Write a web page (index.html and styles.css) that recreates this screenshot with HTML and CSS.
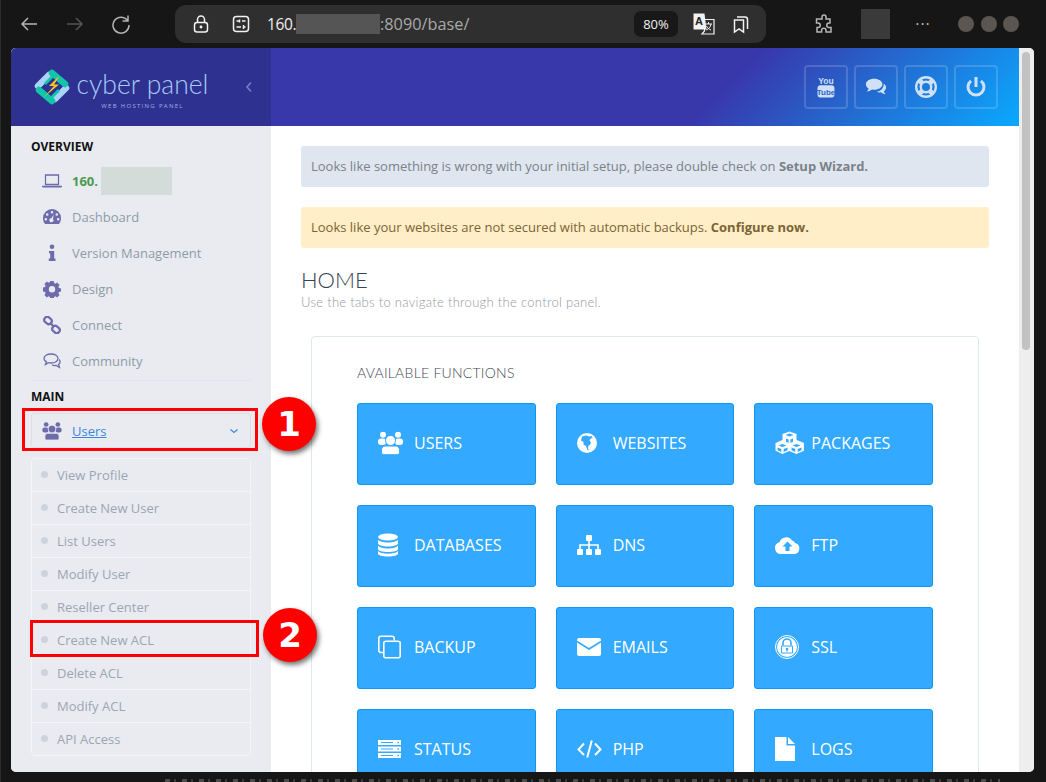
FILE: index.html
```
<!DOCTYPE html>
<html lang="en">
<head>
<meta charset="utf-8">
<title>CyberPanel</title>
<link rel="stylesheet" href="styles.css">
</head>
<body>
<header class="browser-bar">
  <div class="nav-buttons">
    <svg class="tb-icon" viewBox="0 0 20 20"><path d="M18 10H3M9 4l-6 6 6 6"/></svg>
    <svg class="tb-icon dim" viewBox="0 0 20 20"><path d="M2 10h15M11 4l6 6-6 6"/></svg>
    <svg class="tb-icon" viewBox="0 0 20 20"><path d="M16.500 6.500A8 8 0 1 0 18 11M17 1.500v5.500h-5.500"/></svg>
  </div>
  <div class="address">
    <svg class="tb-icon white lock" viewBox="0 0 20 20"><rect x="3.500" y="8.500" width="13" height="9.500" rx="2.500"/><path d="M6.500 8.500V5.500a3.500 3.500 0 0 1 7 0v3"/><circle cx="10" cy="13" r=".7"/></svg>
    <svg class="tb-icon white site" viewBox="0 0 20 20"><rect x="2.500" y="2.500" width="15" height="15" rx="3"/><path d="M5.500 7h3M11 7h3.500M8.500 5.500v3M5.500 13h4.500M13 13h1.500M12.500 11v4"/></svg>
    <span class="url"><span class="url-host">160.</span><span class="url-mask"></span><span>:8090/base/</span></span>
    <span class="zoom-pill">80%</span>
    <svg class="tb-icon translate" viewBox="0 0 22 22">
      <path class="tr-back" d="M11 6.500h10v14.500H9l2.500-3z"/>
      <path class="tr-han" d="M12 11h7M15.500 9v2M18 11c-.5 3-2 5-5 6M13.500 13c.8 1.800 2.500 3.200 4.500 4"/>
      <path class="tr-front" d="M.5 .5h11l2 16H.5z"/>
      <text class="tr-a" x="6" y="12" text-anchor="middle">A</text>
    </svg>
    <svg class="tb-icon white saved" viewBox="0 0 20 20"><path d="M3.500 6h9v12l-4.500-3-4.500 3z"/><path d="M6 3h8a2.500 2.500 0 0 1 2.500 2.500V15"/></svg>
  </div>
  <svg class="tb-icon puzzle" viewBox="0 0 20 20"><path d="M8 3a2 2 0 0 1 4 0v2h4v4h-1a2.200 2.200 0 0 0 0 4.500h2V18h-5v-1.500a2.200 2.200 0 0 0-4.400 0V18H3v-4.500h1a2.200 2.200 0 0 0 0-4.500H2.500V5H8z"/></svg>
  <span class="profile-mask"></span>
  <span class="more">···</span>
  <div class="window-dots"><i></i><i></i><i></i></div>
</header>

<div class="window">
  <div class="page">
    <aside class="sidebar">
      <div class="brand">
        <svg class="brand-mark" viewBox="0 0 36 36">
          <g stroke-width="6.500" fill="none" stroke-linecap="round">
            <path stroke="#a7d4f7" d="M4 17L15 6"/>
            <path stroke="#a7d4f7" d="M32 19L21 30"/>
            <path stroke="#12c4a8" d="M18 4L31 15"/>
            <path stroke="#12c4a8" d="M5 21L18 32"/>
          </g>
          <path fill="#2f3191" d="M18 8l10 10-10 10L8 18z"/>
          <path fill="#12c4a8" d="M18 6l2 2-8 8-2-2zM18 30l-2-2 8-8 2 2z"/>
          <path fill="#ffc61a" d="M24 8l-9 9h5L10 28l15-12.500h-5l5-7.500z"/>
        </svg>
        <div class="brand-text">
          <span class="brand-name">cyber panel</span>
          <span class="brand-sub">WEB HOSTING PANEL</span>
        </div>
        <svg class="collapse" viewBox="0 0 8 12"><path d="M6 1.500L2 6l4 4.500"/></svg>
      </div>
      <nav class="side-nav">
        <h4 class="nav-title">OVERVIEW</h4>
        <a class="nav-item host">
          <svg class="nav-icon" viewBox="0 0 20 14"><path fill="none" stroke="currentColor" stroke-width="1.300" d="M3.500 1h13v9.500h-13z"/><path d="M0 11.800h20v.7l-1 1H1l-1-1z"/></svg>
          <span class="host-ip">160.</span><span class="host-mask"></span>
        </a>
        <a class="nav-item">
          <svg class="nav-icon" viewBox="0 0 18 18"><path fill-rule="evenodd" d="M9 1a9 9 0 0 1 9 9c0 2.500-.7 4.500-2 6H2C.7 14.500 0 12.500 0 10a9 9 0 0 1 9-9zM9 3a1.300 1.300 0 1 0 0 2.600A1.300 1.300 0 0 0 9 3zM4.200 5.200a1.300 1.300 0 1 0 0 2.600 1.300 1.300 0 0 0 0-2.600zM13.800 5.200a1.300 1.300 0 1 0 0 2.600 1.300 1.300 0 0 0 0-2.600zM2.800 10a1.300 1.300 0 1 0 0 2.600 1.300 1.300 0 0 0 0-2.600zM15.200 10a1.300 1.300 0 1 0 0 2.600 1.300 1.300 0 0 0 0-2.600zM10.800 6.500L8.300 10.200a2 2 0 1 0 1.600.7z"/></svg>
          <span>Dashboard</span>
        </a>
        <a class="nav-item">
          <svg class="nav-icon" viewBox="0 0 18 18"><circle cx="9" cy="2.800" r="2.300"/><path d="M6 7h5.200v7.500h1.300V17H5.800v-2.500h1.400V9.300H6z"/></svg>
          <span>Version Management</span>
        </a>
        <a class="nav-item">
          <svg class="nav-icon" viewBox="0 0 18 18"><path fill-rule="evenodd" d="M7.300 1h3.400l.4 2.100 1.300.6 1.800-1.200 2.400 2.400-1.200 1.800.6 1.300 2 .4v3.200l-2 .4-.6 1.300 1.200 1.800-2.400 2.400-1.800-1.200-1.300.6-.4 2.100H7.300l-.4-2.100-1.300-.6-1.800 1.200-2.400-2.400 1.200-1.800-.6-1.300-2-.4V7.400l2-.4.6-1.300-1.200-1.800 2.400-2.400 1.800 1.200 1.300-.6zM9 6a3.200 3.200 0 1 0 0 6.400A3.200 3.200 0 0 0 9 6z"/></svg>
          <span>Design</span>
        </a>
        <a class="nav-item">
          <svg class="nav-icon" viewBox="0 0 18 18"><g fill="none" stroke="currentColor" stroke-width="2.200"><rect x="1" y="1.500" width="8" height="6" rx="3" transform="rotate(40 5 4.500)"/><rect x="9" y="10.500" width="8" height="6" rx="3" transform="rotate(40 13 13.500)"/><path d="M7 6.500l4 4.500"/></g></svg>
          <span>Connect</span>
        </a>
        <a class="nav-item">
          <svg class="nav-icon" viewBox="0 0 18 18"><g fill="none" stroke="currentColor" stroke-width="1.300"><path d="M8 2c4 0 7 2 7 4.500S12 11 8 11c-1 0-2 0-2.500-.3L2.500 12.500l1-2.700C1.800 9 1 7.800 1 6.500 1 4 4 2 8 2z"/><path d="M16 7.500c1 .8 1.300 2 1 3-.3 1-1 1.500-1.500 2l1 2.800-3.500-1.800c-1.500.3-3 0-4-.7"/></g></svg>
          <span>Community</span>
        </a>
        <hr class="nav-rule">
        <h4 class="nav-title main-title">MAIN</h4>
        <a class="nav-open">
          <svg class="nav-icon" viewBox="0 0 25 23"><use href="#ic-users"/></svg>
          <span class="open-label">Users</span>
          <svg class="open-caret" viewBox="0 0 10 6"><path d="M1.500 1.500L5 4.500l3.500-3"/></svg>
        </a>
        <ul class="sub-list">
          <li>View Profile</li>
          <li>Create New User</li>
          <li>List Users</li>
          <li>Modify User</li>
          <li>Reseller Center</li>
          <li>Create New ACL</li>
          <li>Delete ACL</li>
          <li>Modify ACL</li>
          <li>API Access</li>
        </ul>
      </nav>
    </aside>

    <div class="content">
      <div class="topbar">
        <a class="top-btn">
          <svg viewBox="0 0 22 26">
            <text class="yt-you" x="11" y="9.500" text-anchor="middle">You</text>
            <rect x="1" y="11" width="20" height="14.500" rx="3.500"/>
            <text class="yt-tube" x="11" y="22.500" text-anchor="middle">Tube</text>
          </svg>
        </a>
        <a class="top-btn">
          <svg viewBox="0 0 24 20"><path d="M10 1c5 0 9 2.600 9 6s-4 6-9 6c-.8 0-1.600 0-2.300-.2C6 14.200 4 14.800 2 15c1-1 1.700-2 2-3.300C2 10.600 1 9 1 7c0-3.400 4-6 9-6z"/><path d="M20.500 6.500c1.700 1 2.500 2.500 2.500 4 0 1.600-.9 3-2.400 4 .2 1.200.8 2.300 1.900 3.500-2-.3-3.800-1-5.300-2.200-1.600.2-3.200 0-4.500-.6 4-.300 7.800-3.500 7.800-8.700z"/></svg>
        </a>
        <a class="top-btn">
          <svg class="lifering" viewBox="0 0 22 22"><circle cx="11" cy="11" r="9.800"/><circle cx="11" cy="11" r="5.200"/><path class="wedge" d="M4 4l3.800 3.800M18 4l-3.800 3.800M4 18l3.800-3.800M18 18l-3.800-3.800"/></svg>
        </a>
        <a class="top-btn">
          <svg class="power" viewBox="0 0 20 22"><path d="M10 1v10"/><path d="M5 4.800a8 8 0 1 0 10 0"/></svg>
        </a>
      </div>

      <main class="main">
        <p class="alert alert-info">Looks like something is wrong with your initial setup, please double check on <b>Setup Wizard.</b></p>
        <p class="alert alert-warn">Looks like your websites are not secured with automatic backups. <b>Configure now.</b></p>
        <h1 class="page-title">HOME</h1>
        <p class="page-sub">Use the tabs to navigate through the control panel.</p>
        <section class="panel">
          <h2 class="panel-title">AVAILABLE FUNCTIONS</h2>
          <div class="tiles">
            <a class="tile"><svg class="tile-icon w25" viewBox="0 0 25 23"><use href="#ic-users"/></svg><span>USERS</span></a>
            <a class="tile"><svg class="tile-icon w20" viewBox="0 0 20 20"><circle cx="10" cy="10" r="10"/><path class="cut" d="M5 3.500l4-1 3 1 2.500-.5 1 2-2 .5-1 2 1.500 2-1 2.500-1.500.5-.5 3 1 1.500-1.500 0-1.500-4-2.500-1.500 0-2.500-2.500-1.500z"/></svg><span>WEBSITES</span></a>
            <a class="tile"><svg class="tile-icon w29" viewBox="0 0 29 23"><path d="M14.500 0l7 2.600v6l6.500 2.400.9.500v7.700l-7.500 3.300-7-2.900-7 2.900L.5 19.200v-7.700l7-2.900V2.600z"/><path class="cut" d="M14.500 2l4 1.500-4 1.500-4-1.500zM11 7l2.600 1v3.500L11 10.300zM18 7v3.300l-2.600 1.200V8zM7.500 12.500l4 1.500-4 1.500-4-1.500zM2.500 16l3.800 1.400v3L2.500 18.700zM12.500 16v2.700l-3.800 1.700v-3zM21.500 12.500l4 1.500-4 1.500-4-1.500zM16.500 16l3.800 1.400v3l-3.800-1.700zM26.500 16v2.700l-3.800 1.700v-3z"/></svg><span>PACKAGES</span></a>
            <a class="tile"><svg class="tile-icon w20" viewBox="0 0 20 23"><ellipse cx="10" cy="3.500" rx="10" ry="3.500"/><path d="M0 6c1 2 5.500 3 10 3s9-1 10-3v3.800c0 2-4.500 3.200-10 3.200S0 11.800 0 9.800zM0 12c1 2 5.500 3 10 3s9-1 10-3v3.500c0 2-4.500 3-10 3s-10-1-10-3zM0 17.600c1.500 1.800 5.500 2.600 10 2.600s8.500-.8 10-2.600v2.400c0 1.800-4.500 3-10 3s-10-1.200-10-3z"/></svg><span>DATABASES</span></a>
            <a class="tile"><svg class="tile-icon w24" viewBox="0 0 24 20"><rect x="9" y="0" width="6" height="6" rx="1"/><rect x="0" y="14" width="6" height="6" rx="1"/><rect x="9" y="14" width="6" height="6" rx="1"/><rect x="18" y="14" width="6" height="6" rx="1"/><path d="M11.200 6h1.600v3.200H21.800V14h-1.600v-3.200h-7.400V14h-1.600v-3.200H3.800V14H2.200V9.200h9z"/></svg><span>DNS</span></a>
            <a class="tile"><svg class="tile-icon w25" viewBox="0 0 25 18"><path d="M6 18a6 6 0 0 1-1.500-11.800A7 7 0 0 1 17 4.500a3.500 3.500 0 0 1 3 2.500 5.600 5.600 0 0 1-.5 11z"/><path class="cut" d="M12.500 5.500L7.500 10.500h3v4.500h4v-4.500h3z"/></svg><span>FTP</span></a>
            <a class="tile"><svg class="tile-icon w23 outline" viewBox="0 0 23 23"><path d="M5 17H3a2.200 2.200 0 0 1-2.200-2.200V3A2.200 2.200 0 0 1 3 .8h11A2.200 2.200 0 0 1 16.200 3v2"/><rect x="5.800" y="5.800" width="16.400" height="16.400" rx="2"/></svg><span>BACKUP</span></a>
            <a class="tile"><svg class="tile-icon w24" viewBox="0 0 24 18"><rect width="24" height="18" rx="2"/><path class="cut-line" d="M0 3.500l12 7.500 12-7.500"/></svg><span>EMAILS</span></a>
            <a class="tile"><svg class="tile-icon w24" viewBox="0 0 24 24"><circle cx="12" cy="12" r="11.500" fill="none" stroke="#fff"/><circle cx="12" cy="12" r="10"/><path class="cut-line" d="M8 10.500V8a4 4 0 0 1 8 0v2.500"/><rect class="cut" x="6" y="10.500" width="12" height="8" rx="1"/><rect x="7" y="11.500" width="10" height="6"/><circle class="cut" cx="12" cy="14" r="1.300"/><path class="cut" d="M11.400 14h1.200v2.500h-1.200z"/></svg><span>SSL</span></a>
            <a class="tile"><svg class="tile-icon w23" viewBox="0 0 23 18"><path fill-rule="evenodd" d="M0 0h23v5H0zM0 6.500h23v5H0zM0 13h23v5H0z"/><path class="cut" d="M3 2h12v1H3zM3 8.500h12v1H3zM3 15h12v1H3zM19.500 1.800h1.500v1.500h-1.500zM19.500 8.300h1.500v1.500h-1.500zM19.500 14.800h1.500v1.500h-1.500z"/></svg><span>STATUS</span></a>
            <a class="tile"><svg class="tile-icon w25 outline code" viewBox="0 0 25 18"><path d="M7 3.500L1.500 9.500 7 15M18 3.500l5.500 6L18 15M14.800 .5L10.200 17.500"/></svg><span>PHP</span></a>
            <a class="tile"><svg class="tile-icon w20" viewBox="0 0 20 24"><path d="M0 0h11.500v8.500H20V24H0z"/><path d="M13 0l7 7h-7z"/></svg><span>LOGS</span></a>
          </div>
        </section>
      </main>
    </div>
  </div>
  <div class="scrollbar"><div class="thumb"></div></div>
</div>

<div class="backdrop-noise"></div>
<div class="annot annot-1"></div>
<div class="badge badge-1">1</div>
<div class="annot annot-2"></div>
<div class="badge badge-2">2</div>

<svg class="defs" aria-hidden="true">
  <symbol id="ic-users" viewBox="0 0 25 23">
    <circle cx="5" cy="3.200" r="3"/><circle cx="20" cy="3.200" r="3"/>
    <rect x="0" y="7" width="8" height="6.500" rx="3"/><rect x="17" y="7" width="8" height="6.500" rx="3"/>
    <path d="M12.500 4a5 5 0 1 1 0 10 5 5 0 0 1 0-10z" stroke="var(--sym-gap)" stroke-width="1"/>
    <path d="M7 14.500h11c2 0 3.500 2 3.500 4V21c0 1-1 2-2 2h-14c-1 0-2-1-2-2v-2.500c0-2 1.500-4 3.500-4z" stroke="var(--sym-gap)" stroke-width="1"/>
  </symbol>
</svg>
</body>
</html>
```
FILE: styles.css
```
* { box-sizing: border-box; }
html, body { margin: 0; height: 782px; overflow: hidden; }
body { background: #161616; font-family: "Open Sans", "Liberation Sans", sans-serif; position: relative; box-shadow: inset 1px 0 #2b2b2b; }
a { display: block; }
h1, h2, h4, p, ul { margin: 0; padding: 0; }
.defs { position: absolute; width: 0; height: 0; }

/* browser toolbar */
.browser-bar { height: 48px; display: flex; align-items: center; color: #bdbdbd; padding-left: 19px; }
.nav-buttons { display: flex; gap: 26px; width: 156px; }
.tb-icon { width: 20px; height: 20px; fill: none; stroke: #b5b5b5; stroke-width: 1.500; flex: none; }
.tb-icon.dim { stroke: #555; }
.tb-icon.white { stroke: #f2f2f2; }
.address { width: 591px; height: 38px; background: #2f2f2f; border-radius: 11px; display: flex; align-items: center; padding-left: 16px; }
.site { margin-left: 20px; }
.url { margin-left: 16px; font-size: 16.300px; color: #a9a9a9; display: flex; align-items: center; width: 367px; }
.url-host { color: #f0f0f0; width: 29px; font-size: 15.500px; letter-spacing: -.4px; flex: none; }
.url-mask { width: 84px; height: 20px; background: #555; }
.zoom-pill { width: 44px; height: 26px; background: #181818; border-radius: 7px; color: #f0f0f0; font-size: 13px; display: flex; align-items: center; justify-content: center; }
.translate { width: 22px; height: 22px; margin-left: 15px; stroke: none; }
.tr-back { fill: #2f2f2f; stroke: #f2f2f2; stroke-width: 1.200; }
.tr-han { fill: none; stroke: #f2f2f2; stroke-width: 1; }
.tr-front { fill: #f2f2f2; }
.tr-a { font-family: "Liberation Sans", sans-serif; font-weight: 700; font-size: 11px; fill: #222; }
.saved { margin-left: 16px; }
.puzzle { margin-left: 48px; }
.profile-mask { width: 29px; height: 30px; background: #3a3a3a; margin-left: 27px; }
.more { width: 66px; text-align: center; font-size: 16px; letter-spacing: 1px; color: #bbb; }
.window-dots { display: flex; gap: 6.500px; margin-left: 2px; }
.window-dots i { width: 16px; height: 16px; border-radius: 50%; background: #5c5651; }

/* window */
.window { margin-left: 11px; width: 1023px; height: 724px; display: flex; overflow: hidden; border-radius: 5px; background: #fff; }
.page { width: 1008px; display: flex; }
.scrollbar { width: 15px; background: #eee; padding: 4px 4px 0 3px; }
.thumb { height: 298px; background: #c2c2c2; border-radius: 4px; }

/* sidebar */
.sidebar { width: 260px; background: #e9ebf1; flex: none; }
.brand { height: 78px; background: #2f3191; display: flex; align-items: center; padding-left: 23px; color: #a9d0f4; }
.brand-mark { width: 36px; height: 36px; flex: none; }
.brand-text { margin-left: 7px; padding-top: 5px; display: flex; flex-direction: column; align-items: center; width: 131px; }
.brand-name { font-family: Lato, sans-serif; font-weight: 300; font-size: 26.500px; line-height: 30px; color: #a4cdf3; white-space: nowrap; }
.brand-sub { font-size: 6px; line-height: 8px; letter-spacing: 1.300px; color: #a0aee0; margin-top: 3px; }
.collapse { width: 8px; height: 12px; margin-left: 37px; fill: none; stroke: #7b80bf; stroke-width: 1.500; }

.side-nav { padding: 11px 20px 0; }
.nav-title { font-size: 12px; line-height: 20px; font-weight: 700; color: #111; margin-bottom: 6px; }
.main-title { margin-top: 6px; }
.nav-item { height: 36px; display: flex; align-items: center; padding-left: 11px; font-size: 13px; color: #8e9ca8; }
.nav-icon { width: 20px; height: 18px; fill: #6d6bab; color: #6d6bab; flex: none; margin-right: 10px; --sym-gap: #e9ebf1; }
.host-ip { font-weight: 700; color: #4b9a4f; width: 29px; }
.host-mask { width: 71px; height: 28px; background: #d3dcd9; }
.nav-rule { border: 0; border-top: 1px solid #e2e5ec; margin: 1px 0 0; }
.nav-open { height: 35px; display: flex; align-items: center; padding-left: 10px; border: 1px solid #dcdfe7; border-radius: 3px; font-size: 13px; background: #e9ebf1; }
.open-label { color: #3b86df; text-decoration: underline; flex: 1; }
.open-caret { width: 10px; height: 6px; fill: none; stroke: #3b86df; stroke-width: 1.200; margin-right: 11px; }
.sub-list { list-style: none; margin-top: 10px; border: 1px solid #f3f4f8; border-radius: 4px; }
.sub-list li { height: 33px; display: flex; align-items: center; padding-left: 25px; font-size: 13px; color: #9ba6b1; border-bottom: 1px solid #f3f4f8; position: relative; }
.sub-list li:last-child { border-bottom: 0; height: 32px; }
.sub-list li::before { content: ""; position: absolute; left: 9px; top: 12px; width: 7px; height: 7px; border-radius: 50%; background: #ccd3dc; }

/* top bar */
.content { flex: 1; min-width: 0; }
.topbar { height: 78px; background: linear-gradient(135deg, #3838ab 60%, #0aa9ff 100%); display: flex; align-items: center; justify-content: flex-end; gap: 6px; padding-right: 21px; }
.top-btn { width: 44px; height: 44px; border: 2px solid rgba(255,255,255,.16); border-radius: 4px; display: flex; align-items: center; justify-content: center; }
.top-btn svg { width: 22px; height: 22px; fill: #cfe0f7; }
.top-btn .lifering { fill: none; stroke: #cfe0f7; stroke-width: 2.400; }
.top-btn .wedge { stroke-width: 5; }
.top-btn .power { fill: none; stroke: #cfe0f7; stroke-width: 3; }
.yt-you, .yt-tube { font-family: "Liberation Sans", sans-serif; font-weight: 700; }
.yt-you { font-size: 10px; fill: #cfe0f7; }
.yt-tube { font-size: 9.500px; fill: #2a64cc; }

/* main */
.main { padding: 20px 30px 0; }
.alert { height: 41px; margin-bottom: 20px; border-radius: 3px; padding-left: 10px; font-size: 13px; line-height: 41px; }
.alert-info { background: #dfe6f0; color: #7b8288; }
.alert-warn { background: #ffeec7; color: #7c6435; }
.page-title { font-family: Lato, sans-serif; font-weight: 300; font-size: 22px; line-height: 24px; color: #36424f; margin-top: 20px; }
.page-sub { font-family: Lato, sans-serif; font-weight: 300; font-size: 13px; line-height: 20px; color: #94999f; letter-spacing: .3px; }
.panel { margin: 24px 10px 0; border: 1px solid #dfe8f1; border-radius: 4px 4px 0 0; padding: 25px 45px 0; }
.panel-title { font-family: Lato, sans-serif; font-weight: 300; font-size: 14px; line-height: 22px; color: #3f4954; letter-spacing: .25px; margin-bottom: 19px; }
.tiles { display: grid; grid-template-columns: repeat(3, 178.670px); gap: 20px; }
.tile { height: 82px; background: #33a9ff; border: 1px solid #0e96f5; border-radius: 3px; display: flex; align-items: center; padding: 0 0 2px 20px; color: #fff; font-size: 16px; position: relative; }
.tile span { position: absolute; left: 56px; }
.tile-icon { fill: #fff; flex: none; height: 24px; }
.w20 { width: 20px; } .w23 { width: 23px; } .w24 { width: 24px; } .w25 { width: 25px; } .w29 { width: 29px; }
.tile-icon .cut { fill: #33a9ff; }
.tile-icon .cut-line { fill: none; stroke: #33a9ff; stroke-width: 1.600; }
.tile-icon.outline { fill: none; stroke: #fff; stroke-width: 1.600; }
.tile-icon.code { stroke-width: 2; }
.tile-icon[viewBox="0 0 25 23"] { --sym-gap: #33a9ff; }

/* what shows of the desktop below the window */
.backdrop-noise { position: absolute; left: 165px; right: 46px; bottom: 0; height: 3px; background: repeating-linear-gradient(90deg, #4a4a4a 0 5px, #161616 5px 9px, #3a3a3a 9px 11px, #161616 11px 17px); }

/* annotations placed over the page */
.annot { position: absolute; border: 3px solid #f00; }
.annot-1 { left: 22px; top: 408px; width: 236px; height: 43px; }
.annot-2 { left: 30px; top: 620px; width: 229px; height: 37px; }
.badge { position: absolute; width: 54px; height: 54px; border-radius: 50%; background: #f00; color: #fff; font-family: "DejaVu Sans", sans-serif; font-weight: 700; font-size: 34px; line-height: 54px; text-align: center; box-shadow: 2px 3px 5px rgba(0,0,0,.55); }
.badge-1 { left: 262px; top: 397px; }
.badge-2 { left: 263px; top: 608px; }
```
